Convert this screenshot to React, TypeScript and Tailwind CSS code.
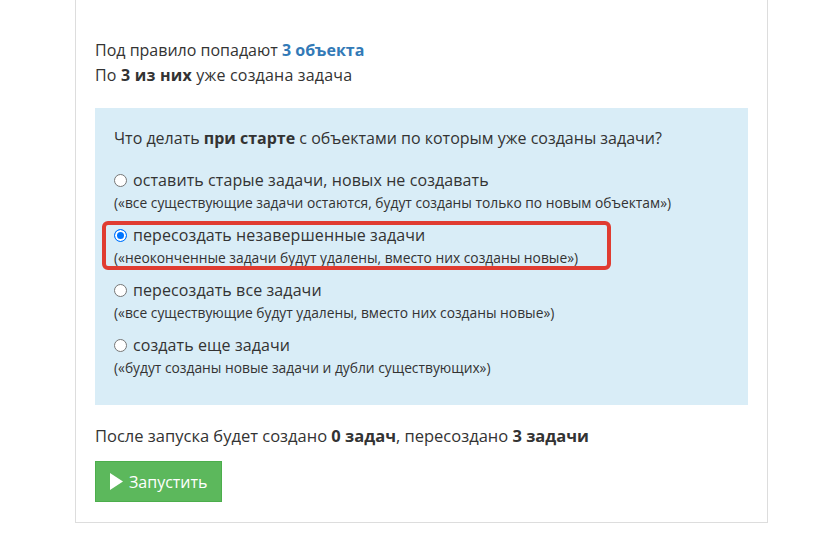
import React from "react";

function Radio({ checked }: { checked?: boolean }) {
  return checked ? (
    <span className="inline-block w-[13px] h-[13px] rounded-full bg-[#0075ff] border border-[#0075ff] shadow-[inset_0_0_0_2px_white] shrink-0" />
  ) : (
    <span className="inline-block w-[13px] h-[13px] rounded-full bg-white border border-[#767676] shrink-0" />
  );
}

function Option({ label, sub, checked, boxed }: { label: string; sub: string; checked?: boolean; boxed?: boolean }) {
  return (
    <div className="relative mb-[9px]">
      {boxed && (
        <div className="absolute left-[-12px] top-[-2px] w-[509px] h-[49px] border-[4px] border-[#e03c31] rounded-[6px] pointer-events-none" />
      )}
      <div className="flex items-center h-[24px] gap-[6px]">
        <Radio checked={checked} />
        <span className="text-[16px] tracking-[0.1px] text-[#333]">{label}</span>
      </div>
      <div className="h-[22px] leading-[22px] text-[13.8px] text-[#333]">{sub}</div>
    </div>
  );
}

export default function App() {
  return (
    <div className="w-[815px] min-h-[545px] bg-white" style={{ fontFamily: "'Open Sans', sans-serif" }}>
      <div className="ml-[75px] w-[693px] border-x border-b border-[#ddd] pt-[38px] px-[19px] pb-[20px]">
        <div className="text-[16px] leading-[25px] text-[#333]">
          Под правило попадают <b className="text-[#337ab7]">3 объекта</b>
        </div>
        <div className="text-[16px] leading-[25px] tracking-[0.2px] text-[#333]">
          По <b>3 из них</b> уже создана задача
        </div>
        <div className="mt-[20px] bg-[#d9edf7] px-[19px] pt-[18px] pb-[17px]">
          <div className="text-[16px] leading-[24px] text-[#333] mb-[18px]">
            Что делать <b>при старте</b> с объектами по которым уже созданы задачи?
          </div>
          <Option
            label="оставить старые задачи, новых не создавать"
            sub="(«все существующие задачи остаются, будут созданы только по новым объектам»)"
          />
          <Option
            checked
            boxed
            label="пересоздать незавершенные задачи"
            sub="(«неоконченные задачи будут удалены, вместо них созданы новые»)"
          />
          <Option
            label="пересоздать все задачи"
            sub="(«все существующие будут удалены, вместо них созданы новые»)"
          />
          <Option
            label="создать еще задачи"
            sub="(«будут созданы новые задачи и дубли существующих»)"
          />
        </div>
        <div className="mt-[19px] text-[16.5px] leading-[24px] text-[#333]">
          После запуска будет создано <b>0 задач</b>, пересоздано <b>3 задачи</b>
        </div>
        <button className="mt-[13px] h-[41px] w-[127px] pl-[14px] bg-[#5cb85c] border border-[#4cae4c] text-white text-[16px] flex items-center gap-[6px]">
          <svg width="13" height="17" viewBox="0 0 13 17"><path d="M0 0 L13 8.5 L0 17 Z" fill="white" /></svg>
          Запустить
        </button>
      </div>
    </div>
  );
}
